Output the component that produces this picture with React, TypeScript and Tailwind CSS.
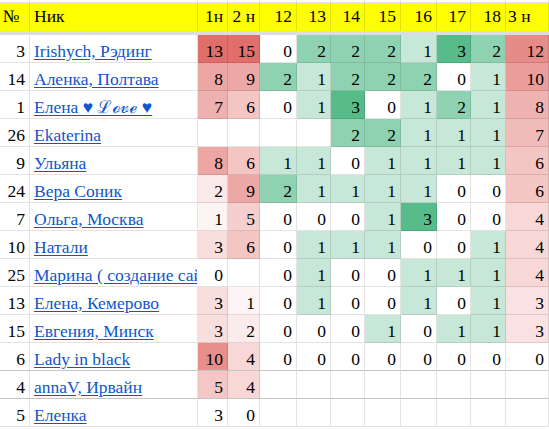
import React from "react";

type Row = {
  n: number;
  name: string;
  w1: number | null;
  w2: number | null;
  d: (number | null)[];
  w3: number | null;
  noScale?: boolean;
  clip?: boolean;
};

const rows: Row[] = [
  { n: 3, name: "Irishych, Рэдинг", w1: 13, w2: 15, d: [0, 2, 2, 2, 1, 3, 2], w3: 12 },
  { n: 14, name: "Аленка, Полтава", w1: 8, w2: 9, d: [2, 1, 2, 2, 2, 0, 1], w3: 10 },
  { n: 1, name: "Елена ♥ ℒℴ𝓋ℯ ♥", w1: 7, w2: 6, d: [0, 1, 3, 0, 1, 2, 1], w3: 8 },
  { n: 26, name: "Ekaterina", w1: null, w2: null, d: [null, null, 2, 2, 1, 1, 1], w3: 7 },
  { n: 9, name: "Ульяна", w1: 8, w2: 6, d: [1, 1, 0, 1, 1, 1, 1], w3: 6 },
  { n: 24, name: "Вера Соник", w1: 2, w2: 9, d: [2, 1, 1, 1, 1, 0, 0], w3: 6 },
  { n: 7, name: "Ольга, Москва", w1: 1, w2: 5, d: [0, 0, 0, 1, 3, 0, 0], w3: 4 },
  { n: 10, name: "Натали", w1: 3, w2: 6, d: [0, 1, 1, 1, 0, 0, 1], w3: 4 },
  { n: 25, name: "Марина ( создание сайтов )", w1: 0, w2: null, d: [0, 1, 0, 0, 1, 1, 1], w3: 4, clip: true },
  { n: 13, name: "Елена, Кемерово", w1: 3, w2: 1, d: [0, 1, 0, 0, 1, 0, 1], w3: 3 },
  { n: 15, name: "Евгения, Минск", w1: 3, w2: 2, d: [0, 0, 0, 1, 0, 1, 1], w3: 3 },
  { n: 6, name: "Lady in black", w1: 10, w2: 4, d: [0, 0, 0, 0, 0, 0, 0], w3: 0 },
  { n: 4, name: "annaV, Ирвайн", w1: 5, w2: 4, d: [null, null, null, null, null, null, null], w3: null },
  { n: 5, name: "Еленка", w1: 3, w2: 0, d: [null, null, null, null, null, null, null], w3: null, noScale: true },
];

const gridCols =
  "grid grid-cols-[30px_168px_30px_32px_37px_34px_34px_36px_36px_34px_35px_43px]";

function red(v: number | null, max: number, off?: boolean): string | undefined {
  if (v === null || off || v <= 0) return undefined;
  const t = Math.min(1, v / max);
  const r = Math.round(255 - t * (255 - 224));
  const g = Math.round(255 - t * (255 - 110));
  const b = Math.round(255 - t * (255 - 106));
  return `rgb(${r},${g},${b})`;
}

const greenCls: Record<number, string> = {
  0: "",
  1: "bg-[#c7e8d8]",
  2: "bg-[#8fd2b1]",
  3: "bg-[#57bb8a]",
};

const cellBase =
  "h-[28px] flex items-end pb-[2px] border-r border-b border-black/[0.11] whitespace-nowrap overflow-hidden";

const headBase = "h-[28px] bg-[#ffff00] border-r border-black/[0.11] flex items-center";

export default function App() {
  const heads = ["1н", "2 н", "12", "13", "14", "15", "16", "17", "18"];
  return (
    <div className="w-[549px] h-[429px] overflow-hidden bg-white text-black font-['Liberation_Serif','Times_New_Roman',serif] text-[17.5px] leading-none">
      <div className={gridCols}>
        {Array.from({ length: 12 }).map((_, i) => (
          <div key={"s" + i} className="h-[3px] border-r border-b border-black/[0.11]" />
        ))}
        <div className={headBase + " pl-[3px]"}>№</div>
        <div className={headBase + " pl-[4px]"}>Ник</div>
        {heads.map((h) => (
          <div key={h} className={headBase + " justify-end pr-[4px]"}>
            {h}
          </div>
        ))}
        <div className={headBase + " pl-[2px]"}>3 н</div>
      </div>
      <div className="h-[4px] bg-[#dadce0]" />
      <div className={gridCols}>
        {rows.map((r, ri) => {
          const dark = ri === 11 || ri === 12 ? " border-b-[#c4c4c4]" : "";
          return (
            <React.Fragment key={r.n}>
              <div className={cellBase + " justify-end pr-[4px]" + dark}>{r.n}</div>
              <div className={cellBase + " pl-[4px]" + dark + (r.clip ? " border-r-transparent" : "")}>
                <a href="#" className="text-[#1155cc] underline underline-offset-[2px]">
                  {r.name}
                </a>
              </div>
              <div
                className={cellBase + " justify-end pr-[4px]" + dark}
                style={{ backgroundColor: red(r.w1, 13, r.noScale) }}
              >
                {r.w1 ?? ""}
              </div>
              <div
                className={cellBase + " justify-end pr-[4px]" + dark}
                style={{ backgroundColor: red(r.w2, 15, r.noScale) }}
              >
                {r.w2 ?? ""}
              </div>
              {r.d.map((v, di) => (
                <div
                  key={di}
                  className={cellBase + " justify-end pr-[4px] " + (v === null ? "" : greenCls[v]) + dark}
                >
                  {v ?? ""}
                </div>
              ))}
              <div
                className={cellBase + " justify-end pr-[4px]" + dark}
                style={{ backgroundColor: red(r.w3, 15, r.noScale) }}
              >
                {r.w3 ?? ""}
              </div>
            </React.Fragment>
          );
        })}
      </div>
    </div>
  );
}
